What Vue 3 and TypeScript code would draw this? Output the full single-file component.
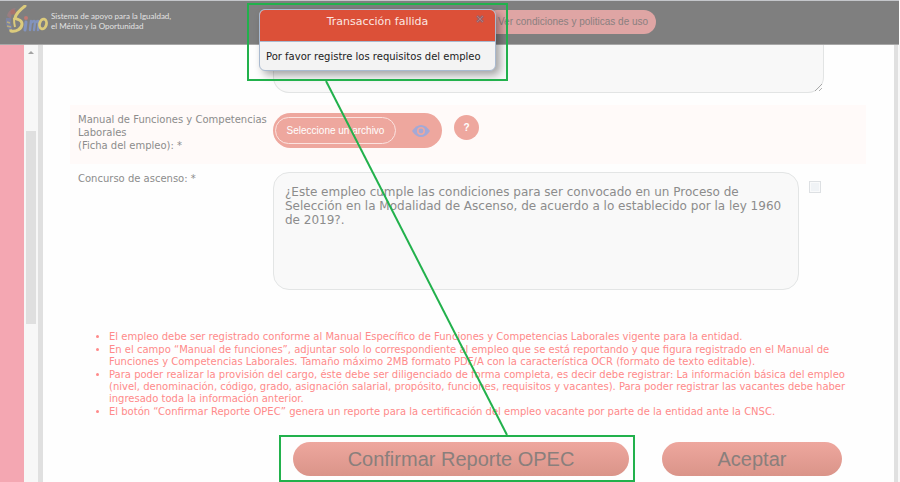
<script setup lang="ts">
import { ref } from 'vue'

const dialogOpen = ref(true)
const description = ref('')
const promotion = ref(false)
const question = ref(
  '¿Este empleo cumple las condiciones para ser convocado en un Proceso de Selección en la Modalidad de Ascenso, de acuerdo a lo establecido por la ley 1960 de 2019?.'
)

const notes: string[] = [
  'El empleo debe ser registrado conforme al Manual Específico de Funciones y Competencias Laborales vigente para la entidad.',
  'En el campo “Manual de funciones”, adjuntar solo lo correspondiente al empleo que se está reportando y que figura registrado en el Manual de Funciones y Competencias Laborales. Tamaño máximo 2MB formato PDF/A con la característica OCR (formato de texto editable).',
  'Para poder realizar la provisión del cargo, éste debe ser diligenciado de forma completa, es decir debe registrar: La información básica del empleo (nivel, denominación, código, grado, asignación salarial, propósito, funciones, requisitos y vacantes). Para poder registrar las vacantes debe haber ingresado toda la información anterior.',
  'El botón “Confirmar Reporte OPEC” genera un reporte para la certificación del empleo vacante por parte de la entidad ante la CNSC.'
]
</script>

<template>
  <div class="page">
    <header class="topbar">
      <svg class="logo" viewBox="0 0 44 30" aria-hidden="true">
        <path d="M2 11C3 6 7 3 11 3C8 6 6 9 6 14Z" fill="#9a7d80" />
        <path d="M1 13C0 20 3 26 8 28L7 22Q5 18 6 13Z" fill="#7d84a0" />
        <path d="M2 17l3 1M2 21l4 1M4 25l3 0" stroke="#b9ac7c" stroke-width="1.6" />
        <circle cx="8" cy="7" r="2.6" fill="#a9726c" />
        <path d="M20 1C16 4 11 8 10 13C12 15 17 14 17 19C17 24 11 27 6 26" fill="none" stroke="#dccb7c" stroke-width="3" stroke-linecap="round" />
        <path d="M9 13Q9 18 10 22" fill="none" stroke="#dccb7c" stroke-width="2" />
        <path d="M21 17L20 25" stroke="#8293bd" stroke-width="3" stroke-linecap="round" />
        <circle cx="21" cy="13" r="2" fill="#c07a74" />
        <path d="M25 25L26 16M26 18Q30 14 30 18L29 25M30 18Q34 14 33.500 18L33 25" fill="none" stroke="#8293bd" stroke-width="2.4" stroke-linecap="round" />
        <ellipse cx="38" cy="19" rx="3.400" ry="5" transform="rotate(14 38 19)" fill="none" stroke="#dccb7c" stroke-width="2.8" />
      </svg>
      <p class="tagline">Sistema de apoyo para la Igualdad,<br />el Mérito y la Oportunidad</p>
      <a class="terms" href="#condiciones">Ver condiciones y politicas de uso</a>
    </header>

    <div class="body">
      <div class="side"></div>
      <div class="scrollbar">
        <svg class="arrow" viewBox="0 0 6 4" aria-hidden="true"><path d="M0 3L3 0L6 3Z" fill="#a3a3a3" /></svg>
        <div class="thumb"></div>
      </div>

      <main class="panel">
        <div class="row first">
          <span></span>
          <textarea v-model="description" class="box description" aria-label="Descripción"></textarea>
        </div>

        <div class="row shaded">
          <label class="label" for="manual">Manual de Funciones y Competencias Laborales<br />(Ficha del empleo): *</label>
          <div class="upload">
            <div class="pill">
              <button id="manual" class="choose" type="button">Seleccione un archivo</button>
              <button class="view" type="button" aria-label="Ver archivo">
                <svg viewBox="0 0 18 12" width="18" height="12">
                  <path d="M0 6Q4 0 9 0T18 6Q14 12 9 12T0 6Z" fill="#a3a9d6" />
                  <circle cx="9" cy="6" r="4" fill="#eea79e" />
                  <circle cx="9" cy="6" r="2.4" fill="#a3a9d6" />
                </svg>
              </button>
            </div>
            <button class="help" type="button" aria-label="Ayuda">?</button>
          </div>
        </div>

        <div class="row promotion">
          <label class="label" for="promotion">Concurso de ascenso: *</label>
          <div class="field">
            <textarea v-model="question" class="box question" readonly aria-label="Condiciones del concurso"></textarea>
            <input id="promotion" v-model="promotion" class="check" type="checkbox" />
          </div>
        </div>

        <ul class="notes">
          <li v-for="note in notes" :key="note">{{ note }}</li>
        </ul>

        <div class="actions">
          <button class="action confirm" type="button">Confirmar Reporte OPEC</button>
          <button class="action accept" type="button">Aceptar</button>
        </div>
      </main>
      <div class="gutter"></div>
    </div>

    <section v-if="dialogOpen" class="dialog" role="dialog" aria-labelledby="dialog-title">
      <div class="dialog-head">
        <h2 id="dialog-title">Transacción fallida</h2>
        <button class="close" type="button" aria-label="Cerrar" @click="dialogOpen = false">
          <svg viewBox="0 0 8 8" width="8" height="8">
            <path d="M1 1L7 7M7 1L1 7" stroke="#96606a" stroke-width="2.8" />
            <path d="M1 1L7 7M7 1L1 7" stroke="#c98d88" stroke-width="0.6" />
          </svg>
        </button>
      </div>
      <p class="dialog-text">Por favor registre los requisitos del empleo</p>
    </section>

    <svg class="callout" width="900" height="482" viewBox="0 0 900 482" aria-hidden="true">
      <g fill="none" stroke="#22b14c" stroke-width="2">
        <rect x="248" y="4" width="259" height="76" />
        <path d="M326 81L507 435" />
        <rect x="280" y="436" width="354" height="45" />
      </g>
    </svg>
  </div>
</template>

<style>
body {
  margin: 0;
  background: #fff;
}
</style>

<style scoped>
* {
  box-sizing: border-box;
}

.page {
  position: relative;
  display: flex;
  flex-direction: column;
  min-height: 100vh;
  overflow: hidden;
  font-family: "DejaVu Sans", Verdana, sans-serif;
  font-size: 10px;
  color: #8c8c8c;
}

.topbar {
  display: flex;
  align-items: flex-start;
  height: 45px;
  margin-right: 1px;
  padding: 4px 0 0 5px;
  background: #7f7f7f;
  border-top: 1px solid #c4c6ca;
  border-bottom: 1px solid #a8a8a8;
}

.logo {
  width: 44px;
  height: 30px;
}

.tagline {
  width: 434px;
  margin: 6px 0 0 2px;
  font: 8px/10px Lato, Roboto, sans-serif;
  color: #e2e2e2;
}

.terms {
  display: flex;
  align-items: center;
  height: 24px;
  margin-top: 5px;
  padding: 0 8px 0 13px;
  border-radius: 12px;
  background: #dfa5a4;
  color: #8a8080;
  font: 10px/12px "Liberation Sans", Arial, sans-serif;
  text-decoration: none;
}

.body {
  display: flex;
  flex: 1;
}

.side {
  width: 24px;
  background: #f4a7b2;
}

.scrollbar {
  display: flex;
  flex-direction: column;
  align-items: center;
  width: 14px;
  padding-top: 6px;
  background: #f7f7f7;
}

.arrow {
  width: 6px;
  height: 4px;
}

.thumb {
  width: 10px;
  height: 193px;
  margin-top: 76px;
  background: #dfdfdf;
}

.panel {
  flex: 1;
  padding: 0 28px 5px 27px;
  background: #fefefe;
  border-left: 5px solid #e0e0e0;
}

.gutter {
  width: 6px;
  border-left: 4px solid #e0e0e0;
  background: #f7f7f7;
}

.row {
  display: grid;
  grid-template-columns: 195px 1fr;
  padding-left: 8px;
}

.first {
  height: 60px;
}

.box {
  display: block;
  margin: 0;
  background: #f9f9f9;
  border: 1px solid #e3e5e5;
  outline: none;
  color: #8c8c8c;
  font-family: inherit;
}

.description {
  width: 551px;
  height: 48px;
  border-color: #c8cccc;
  border-top: 0;
  border-radius: 0 0 16px 16px;
  background: #f4f4f4;
  opacity: 0.5;
}

.shaded {
  height: 59px;
  padding-top: 8px;
  background: #fffaf9;
}

.label {
  line-height: 13px;
}

.upload {
  display: flex;
  align-items: flex-start;
  gap: 12px;
}

.pill {
  display: flex;
  align-items: center;
  gap: 16px;
  width: 169px;
  height: 35px;
  padding-left: 2px;
  border-radius: 18px;
  background: #eea79e;
}

button {
  padding: 0;
  border: 0;
  cursor: pointer;
}

.choose {
  width: 121px;
  height: 27px;
  border: 1px solid #fbe3e0;
  border-radius: 14px;
  background: none;
  color: #fff;
  font: 10px/12px "Liberation Sans", Arial, sans-serif;
}

.view {
  display: flex;
  background: none;
}

.help {
  width: 25px;
  height: 25px;
  margin-top: 2px;
  border-radius: 50%;
  background: #eea79e;
  color: #fff;
  font: bold 10px/12px "Liberation Sans", Arial, sans-serif;
}

.promotion {
  padding-top: 8px;
}

.field {
  display: flex;
  align-items: flex-start;
  gap: 10px;
}

.question {
  width: 526px;
  height: 118px;
  padding: 12px 11px;
  border-radius: 16px;
  font-size: 12px;
  line-height: 14px;
  resize: none;
}

.check {
  appearance: none;
  width: 12px;
  height: 12px;
  margin: 9px 0 0;
  border: 1px solid #dde0e3;
  background: #f0f3f6;
  box-shadow: inset 0 0 0 1px #f9fafb;
}

.check:checked {
  background: #eea79e;
}

.notes {
  margin: 41px 0 0;
  padding: 0 10px 0 39px;
  color: #ff8a8a;
  line-height: 12px;
}

.notes li + li {
  margin-top: 1px;
}

.actions {
  display: flex;
  gap: 33px;
  margin: 24px 0 0 223px;
}

.action {
  height: 34px;
  border-radius: 17px;
  background: linear-gradient(#eea79e, #da9489);
  color: #8a7f7c;
  font: 20px/24px "Liberation Sans", Arial, sans-serif;
}

.confirm {
  width: 336px;
}

.accept {
  width: 180px;
}

.dialog {
  position: absolute;
  top: 9px;
  left: 259px;
  width: 237px;
  border: 1px solid #a9bad0;
  border-radius: 6px;
  background: #f3f3f3;
  box-shadow: 4px 4px 8px rgba(0, 0, 0, 0.35);
  overflow: hidden;
}

.dialog-head {
  position: relative;
  height: 32px;
  padding-top: 4px;
  border-bottom: 1px solid #a9bad0;
  background: #dc5038;
}

.dialog-head h2 {
  margin: 0;
  color: #fbe6e2;
  font-size: 11px;
  font-weight: normal;
  line-height: 15px;
  text-align: center;
}

.close {
  position: absolute;
  top: 5px;
  right: 11px;
  display: flex;
  background: none;
}

.dialog-text {
  margin: 0;
  padding: 8px 6px 7px;
  color: #222;
  line-height: 13px;
  white-space: nowrap;
}

.callout {
  position: absolute;
  top: 0;
  left: 0;
  pointer-events: none;
}
</style>
